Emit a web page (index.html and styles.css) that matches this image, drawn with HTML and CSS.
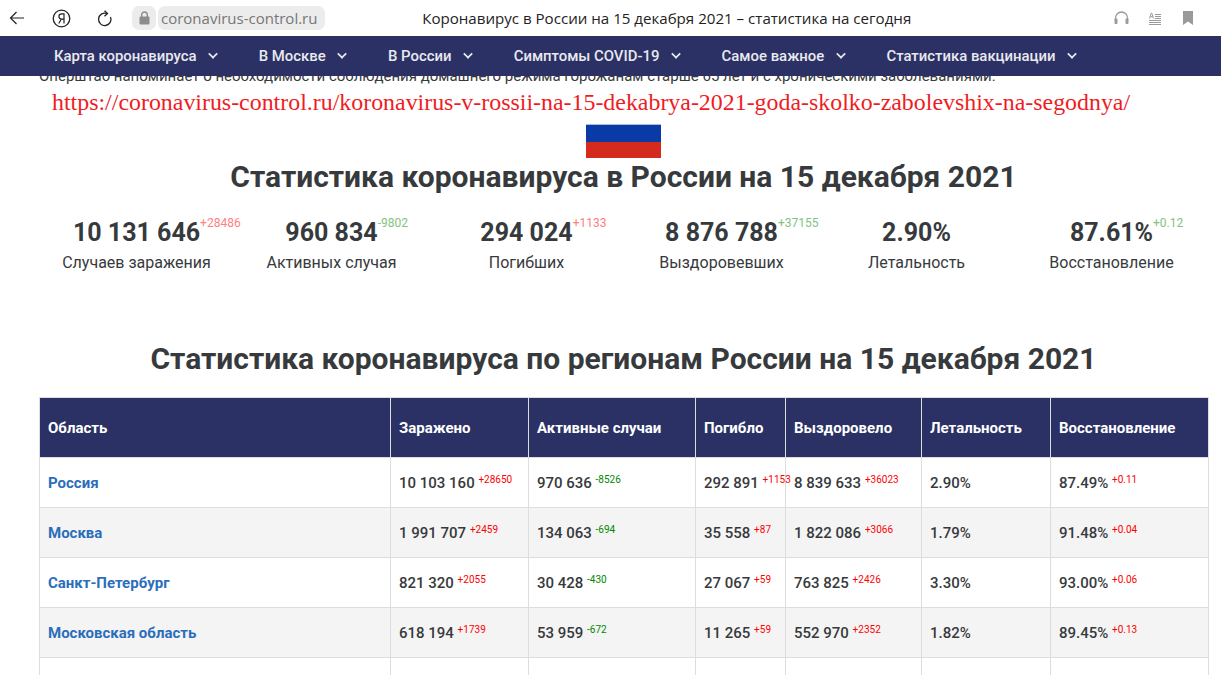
FILE: index.html
```html
<!DOCTYPE html>
<html lang="ru">
<head>
  <meta charset="UTF-8" />
  <title>Коронавирус в России на 15 декабря 2021</title>
  <link rel="stylesheet" href="styles.css">
</head>
<body>

  <div class="browser-bar">
    <svg class="icon back" width="16" height="14" viewBox="0 0 16 14"><path d="M15 7H1.5M7.5 1 1.5 7l6 6" fill="none" stroke="#222" stroke-width="1.2"/></svg>
    <svg class="icon ya" width="19" height="19" viewBox="0 0 19 19"><circle cx="9.5" cy="9.5" r="8.3" fill="none" stroke="#222" stroke-width="1.3"/><path d="M12 14.5V4.8H9.8c-1.8 0-2.9 1-2.9 2.7 0 1.500.9 2.400 2.900 2.700h2.200M9.300 10l-2.500 4.500" fill="none" stroke="#222" stroke-width="1.200"/></svg>
    <svg class="icon reload" width="16" height="17" viewBox="0 0 16 17"><path d="M13.500 7a6.200 6.200 0 1 1-3.700-3.500" fill="none" stroke="#222" stroke-width="1.300"/><path d="M7.500.8 10.500 3.500 7.500 6.300" fill="none" stroke="#222" stroke-width="1.300"/></svg>
    <div class="lock-box">
      <svg width="11" height="14" viewBox="0 0 11 14"><rect x="0.500" y="5.500" width="10" height="8" rx="1" fill="#8c8c8c"/><path d="M2.700 6V3.800a2.800 2.800 0 0 1 5.600 0V6" fill="none" stroke="#8c8c8c" stroke-width="1.400"/></svg>
    </div>
    <div class="url-box">coronavirus-control.ru</div>
    <div class="page-title">Коронавирус в России на 15 декабря 2021 – статистика на сегодня</div>
    <svg class="icon phones" width="15" height="14" viewBox="0 0 15 14"><path d="M1.500 9V7a6 6 0 0 1 12 0v2" fill="none" stroke="#9a9a9a" stroke-width="1.300"/><rect x="0.500" y="7.500" width="3" height="5.500" rx="1" fill="#9a9a9a"/><rect x="11.500" y="7.500" width="3" height="5.500" rx="1" fill="#9a9a9a"/></svg>
    <svg class="icon reader" width="12" height="13" viewBox="0 0 12 13"><path d="M0 12.500h12M0 10.500h12M0 8.500h12M6 6.500h6M6 4.500h6M6 2.500h6" stroke="#9a9a9a" stroke-width="1"/><path d="M.5 6.500 2.300 1h.4l1.800 5.500M1.200 4.700h2.600" fill="none" stroke="#9a9a9a" stroke-width="1"/></svg>
    <svg class="icon mark" width="10" height="14" viewBox="0 0 10 14"><path d="M0 0h10v14L5 10.500 0 14z" fill="#9a9a9a"/></svg>
  </div>

  <nav class="main-nav">
    <a class="nav-item">Карта коронавируса <span class="caret"></span></a>
    <a class="nav-item">В Москве <span class="caret"></span></a>
    <a class="nav-item">В России <span class="caret"></span></a>
    <a class="nav-item">Симптомы COVID-19 <span class="caret"></span></a>
    <a class="nav-item">Самое важное <span class="caret"></span></a>
    <a class="nav-item">Статистика вакцинации <span class="caret"></span></a>
  </nav>

  <main class="content">
    <p class="notice">Оперштаб напоминает о необходимости соблюдения домашнего режима горожанам старше 65 лет и с хроническими заболеваниями.</p>
    <p class="source-link">https://coronavirus-control.ru/koronavirus-v-rossii-na-15-dekabrya-2021-goda-skolko-zabolevshix-na-segodnya/</p>
    <div class="flag"></div>
    <h1>Статистика коронавируса в России на 15 декабря 2021</h1>

    <div class="stats">
      <div class="stat"><div class="stat-num"><span class="num-wrap">10 131 646<sup class="up">+28486</sup></span></div><div class="stat-label">Случаев заражения</div></div>
      <div class="stat"><div class="stat-num"><span class="num-wrap">960 834<sup class="down">-9802</sup></span></div><div class="stat-label">Активных случая</div></div>
      <div class="stat"><div class="stat-num"><span class="num-wrap">294 024<sup class="up">+1133</sup></span></div><div class="stat-label">Погибших</div></div>
      <div class="stat"><div class="stat-num"><span class="num-wrap">8 876 788<sup class="down">+37155</sup></span></div><div class="stat-label">Выздоровевших</div></div>
      <div class="stat"><div class="stat-num"><span class="num-wrap">2.90%</span></div><div class="stat-label">Летальность</div></div>
      <div class="stat"><div class="stat-num"><span class="num-wrap">87.61%<sup class="down">+0.12</sup></span></div><div class="stat-label">Восстановление</div></div>
    </div>

    <h2>Статистика коронавируса по регионам России на 15 декабря 2021</h2>

    <table class="regions">
      <colgroup>
        <col class="c-region"><col class="c-infected"><col class="c-active"><col class="c-dead"><col class="c-healed"><col class="c-lethal"><col class="c-recovery">
      </colgroup>
      <thead>
        <tr><th>Область</th><th>Заражено</th><th>Активные случаи</th><th>Погибло</th><th>Выздоровело</th><th>Летальность</th><th>Восстановление</th></tr>
      </thead>
      <tbody>
        <tr>
          <td><a>Россия</a></td>
          <td>10 103 160 <sup class="plus">+28650</sup></td>
          <td>970 636 <sup class="minus">-8526</sup></td>
          <td>292 891 <sup class="plus">+1153</sup></td>
          <td>8 839 633 <sup class="plus">+36023</sup></td>
          <td>2.90%</td>
          <td>87.49% <sup class="plus">+0.11</sup></td>
        </tr>
        <tr>
          <td><a>Москва</a></td>
          <td>1 991 707 <sup class="plus">+2459</sup></td>
          <td>134 063 <sup class="minus">-694</sup></td>
          <td>35 558 <sup class="plus">+87</sup></td>
          <td>1 822 086 <sup class="plus">+3066</sup></td>
          <td>1.79%</td>
          <td>91.48% <sup class="plus">+0.04</sup></td>
        </tr>
        <tr>
          <td><a>Санкт-Петербург</a></td>
          <td>821 320 <sup class="plus">+2055</sup></td>
          <td>30 428 <sup class="minus">-430</sup></td>
          <td>27 067 <sup class="plus">+59</sup></td>
          <td>763 825 <sup class="plus">+2426</sup></td>
          <td>3.30%</td>
          <td>93.00% <sup class="plus">+0.06</sup></td>
        </tr>
        <tr>
          <td><a>Московская область</a></td>
          <td>618 194 <sup class="plus">+1739</sup></td>
          <td>53 959 <sup class="minus">-672</sup></td>
          <td>11 265 <sup class="plus">+59</sup></td>
          <td>552 970 <sup class="plus">+2352</sup></td>
          <td>1.82%</td>
          <td>89.45% <sup class="plus">+0.13</sup></td>
        </tr>
        <tr class="empty-row"><td></td><td></td><td></td><td></td><td></td><td></td><td></td></tr>
      </tbody>
    </table>
  </main>

</body>
</html>
```

FILE: styles.css
```css
html, body {
  height: 675px;
  overflow: hidden;
}
body {
  margin: 0;
  background: #fff;
  font-family: 'Roboto', sans-serif;
  color: #373a3c;
}

/* browser chrome */
.browser-bar {
  height: 36px;
  display: flex;
  align-items: center;
  padding-left: 9px;
  padding-right: 28px;
  background: #fff;
  position: relative;
}
.icon {
  flex: none;
}
.back {
  margin-right: 27px;
}
.ya {
  margin-right: 26px;
}
.reload {
  margin-right: 19px;
}
.lock-box {
  width: 24px;
  height: 24px;
  background: #ececec;
  border-radius: 7px;
  display: flex;
  align-items: center;
  justify-content: center;
  margin-right: 2px;
}
.url-box {
  height: 24px;
  line-height: 24px;
  padding: 0 8px 0 3px;
  background: #ececec;
  border-radius: 7px;
  font-family: 'Open Sans', sans-serif;
  font-size: 15px;
  color: #777;
}
.page-title {
  flex: 1;
  text-align: center;
  font-family: 'Open Sans', sans-serif;
  font-size: 15.1px;
  color: #222;
  padding-right: 106px;
  white-space: nowrap;
}
.phones {
  margin-right: 20px;
}
.reader {
  margin-right: 22px;
}

/* site nav */
.main-nav {
  height: 40px;
  background: #2b3165;
  display: flex;
  align-items: center;
  padding-left: 54px;
  gap: 39.5px;
  position: relative;
  z-index: 2;
}
.nav-item {
  font-size: 14.9px;
  font-weight: 500;
  color: #e9e9ef;
  white-space: nowrap;
}
.caret {
  display: inline-block;
  width: 6px;
  height: 6px;
  margin-left: 9px;
  margin-right: 2px;
  border-right: 2px solid #e9e9ef;
  border-bottom: 2px solid #e9e9ef;
  transform: translateY(-3px) rotate(45deg) scale(0.85);
}

.content {
  padding: 0 13px 0 39px;
}
.notice {
  margin: -9px 0 0;
  font-size: 15px;
  line-height: 18px;
}
.source-link {
  margin: 2px 0 0 13px;
  font-family: 'Liberation Serif', serif;
  font-size: 23.9px;
  line-height: 30px;
  color: #f01c24;
  white-space: nowrap;
}
.flag {
  width: 75px;
  height: 34px;
  margin: 7px auto 0;
  background: linear-gradient(#0a3aa5 50%, #d52b1e 50%);
  border-top: 1px solid #a9bcdc;
  box-sizing: border-box;
}
h1, h2 {
  margin: 0;
  text-align: center;
  font-size: 30px;
  font-weight: 700;
  line-height: 36px;
}
h1 {
  margin-top: 1px;
}
.stats {
  display: flex;
  margin-top: 21px;
  margin-right: -1px;
}
.stat {
  flex: 1;
  text-align: center;
}
.stat-num {
  font-size: 25px;
  font-weight: 700;
  line-height: 34px;
}
.num-wrap {
  position: relative;
}
.stat-num sup {
  position: absolute;
  left: 100%;
  top: -2px;
  font-size: 12px;
  font-weight: 400;
  line-height: 14px;
}
.up {
  color: #ff8080;
}
.down {
  color: #80c480;
}
.stat-label {
  font-size: 16px;
  line-height: 24px;
  margin-top: 1px;
}
h2 {
  margin-top: 66px;
}

/* table */
.regions {
  width: 1170px;
  margin-top: 20px;
  border-collapse: collapse;
  table-layout: fixed;
  font-size: 15px;
}
.c-region { width: 351px; }
.c-infected { width: 138px; }
.c-active { width: 167px; }
.c-dead { width: 90px; }
.c-healed { width: 136px; }
.c-lethal { width: 129px; }
.c-recovery { width: 158px; }
.regions th {
  height: 59px;
  padding: 0 8px;
  background: #2b3165;
  color: #fff;
  text-align: left;
  font-weight: 700;
  border: 1px solid #ddd;
}
.regions td {
  height: 49px;
  padding: 0 8px;
  font-weight: 500;
  white-space: nowrap;
  border: 1px solid #ddd;
}
.regions tbody tr:nth-child(even) td {
  background: #f4f4f4;
}
.regions a {
  color: #2a6ebb;
  font-weight: 700;
}
.regions sup {
  font-size: 10px;
  font-weight: 400;
  line-height: 0;
  vertical-align: 5px;
}
.plus {
  color: #f00;
}
.minus {
  color: #080;
}
```
